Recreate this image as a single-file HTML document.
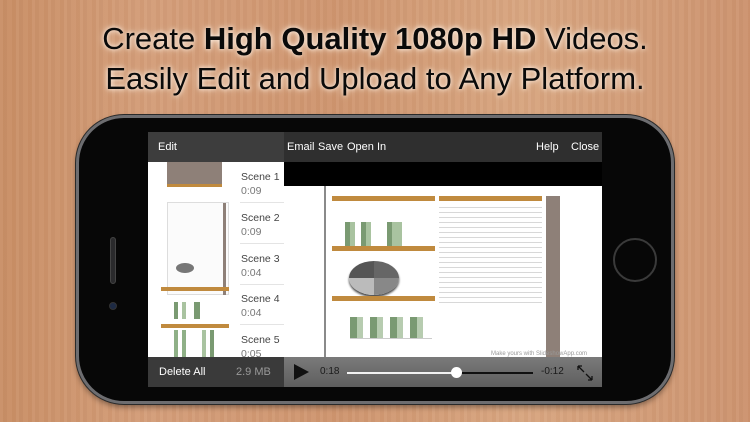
<!DOCTYPE html>
<html><head><meta charset="utf-8"><style>
*{margin:0;padding:0;box-sizing:border-box}
body{width:750px;height:422px;overflow:hidden;position:relative;font-family:"Liberation Sans",sans-serif;
background:
repeating-linear-gradient(90deg,rgba(255,255,255,0.04) 0 3px,rgba(0,0,0,0.02) 3px 7px,rgba(255,255,255,0.02) 7px 12px,rgba(120,60,20,0.04) 12px 16px),
linear-gradient(90deg,#c98f66,#d49e7a 20%,#cf9670 45%,#d8a681 70%,#cd9470);}
.t{position:absolute;left:0;width:750px;text-align:center;font-size:31px;color:#0a0a0a;
text-shadow:0 0 4px #fff3e8,0 0 8px rgba(255,240,225,.8)}
.phone{position:absolute;left:76px;top:115px;width:598px;height:289px;border-radius:48px;
background:#070707;border:3px solid #6d6d70;box-shadow:0 0 0 1px #2a2a2a,0 3px 6px rgba(0,0,0,.4)}
.scr{position:absolute;left:148px;top:132px;width:454px;height:255px;background:#fff;overflow:hidden}
.abs{position:absolute}
.top{left:0;top:0;height:30px;width:454px;background:#2f2f2f;color:#fff;font-size:11px}
.top span{position:absolute;top:9px}
.sc{position:absolute;left:93px;color:#444;font-size:10.5px;line-height:14px}
.sc b{font-weight:normal;color:#777;display:block}
.sep{position:absolute;left:92px;width:44px;height:1px;background:#e4e4e4}
.bar{position:absolute;height:8px;background:#c08a3e}
</style></head><body>
<div class="t" style="top:21px">Create <b>High Quality 1080p HD</b> Videos.</div>
<div class="t" style="top:61px">Easily Edit and Upload to Any Platform.</div>
<div class="phone"></div>
<div class="abs" style="left:110px;top:237px;width:6px;height:47px;border-radius:3px;background:#2a2a2c;border:1px solid #444"></div>
<div class="abs" style="left:109px;top:302px;width:8px;height:8px;border-radius:50%;background:#1d2a44;border:1px solid #333"></div>
<div class="abs" style="left:613px;top:238px;width:44px;height:44px;border-radius:50%;border:2px solid #3a3a3a"></div>
<div class="scr">
 <div class="abs top"><div class="abs" style="left:0;top:0;width:136px;height:30px;background:#3d3d3d"></div>
  <span style="left:10px">Edit</span><span style="left:139px">Email</span><span style="left:170px">Save</span><span style="left:199px">Open In</span><span style="left:388px">Help</span><span style="left:423px">Close</span></div>
 <div class="abs" style="left:136px;top:30px;width:318px;height:24px;background:#000"></div>
 <div class="abs" style="left:19px;top:30px;width:55px;height:25px;background:#8e8078;border-bottom:3px solid #c08a3e"></div>
 <div class="abs" style="left:19px;top:70px;width:62px;height:93px;border:1px solid #ddd;background:#fbfbfb"><div class="abs" style="right:2px;top:0;width:3px;height:92px;background:#8e8078"></div><div class="abs" style="left:8px;top:60px;width:18px;height:10px;border-radius:50%;background:#777"></div></div>
 <div class="abs" style="left:13px;top:155px;width:68px;height:4px;background:#c08a3e"></div>
 <div class="abs" style="left:26px;top:170px;width:40px;height:17px;background:linear-gradient(90deg,#7a9a72 0 4px,transparent 4px 8px,#a9c3a0 8px 12px,transparent 12px 20px,#7a9a72 20px 26px,transparent 26px)"></div>
 <div class="abs" style="left:13px;top:192px;width:68px;height:4px;background:#c08a3e"></div>
 <div class="abs" style="left:20px;top:198px;width:62px;height:30px;background:linear-gradient(90deg,transparent 0 6px,#8fb087 6px 10px,transparent 10px 14px,#8fb087 14px 18px,transparent 18px 34px,#a9c3a0 34px 38px,transparent 38px 42px,#7a9a72 42px 46px,transparent 46px)"></div>
 <div class="sc" style="top:38px">Scene 1<b>0:09</b></div><div class="sep" style="top:70px"></div>
 <div class="sc" style="top:79px">Scene 2<b>0:09</b></div><div class="sep" style="top:111px"></div>
 <div class="sc" style="top:120px">Scene 3<b>0:04</b></div><div class="sep" style="top:152px"></div>
 <div class="sc" style="top:160px">Scene 4<b>0:04</b></div><div class="sep" style="top:192px"></div>
 <div class="sc" style="top:201px">Scene 5<b>0:05</b></div>
 <div class="abs" style="left:176px;top:54px;width:2px;height:171px;background:#8a8a8a"></div>
 <div class="bar" style="left:184px;top:64px;width:103px;height:5px"></div>
 <div class="abs" style="left:197px;top:90px;width:87px;height:26px;background:linear-gradient(90deg,#7a9a72 0 5px,#a9c3a0 5px 10px,transparent 10px 16px,#7a9a72 16px 21px,#a9c3a0 21px 26px,transparent 26px 42px,#7a9a72 42px 47px,#a9c3a0 47px 57px,transparent 57px);border-bottom:1px solid #ccc"></div>
 <div class="bar" style="left:184px;top:114px;width:103px;height:5px"></div>
 <div class="abs" style="left:201px;top:129px;width:50px;height:34px;border-radius:50%;background:conic-gradient(#666 0 25%,#888 25% 50%,#bbb 50% 75%,#555 75%);box-shadow:0 2px 2px #444"></div>
 <div class="bar" style="left:184px;top:164px;width:103px;height:5px"></div>
 <div class="abs" style="left:202px;top:185px;width:82px;height:22px;background:linear-gradient(90deg,#7a9a72 0 7px,#b7ccb0 7px 13px,transparent 13px 20px,#7a9a72 20px 27px,#b7ccb0 27px 33px,transparent 33px 40px,#7a9a72 40px 47px,#b7ccb0 47px 53px,transparent 53px 60px,#7a9a72 60px 67px,#b7ccb0 67px 73px,transparent 73px);border-bottom:1px solid #ccc"></div>
 <div class="bar" style="left:291px;top:64px;width:103px;height:5px"></div>
 <div class="abs" style="left:291px;top:72px;width:103px;height:103px;background:repeating-linear-gradient(180deg,#fff 0 3px,#d8d8d8 3px 4px,#fff 4px 5px)"></div>
 <div class="abs" style="left:398px;top:64px;width:14px;height:164px;background:#8e8078"></div>
 <div class="abs" style="left:343px;top:219px;font-size:6px;color:#999">Make yours with SlideshowApp.com</div>
 <div class="abs" style="left:0;top:225px;width:136px;height:30px;background:#3a3a3a;color:#fff;font-size:11px"><span class="abs" style="left:11px;top:9px">Delete All</span><span class="abs" style="left:88px;top:9px;color:#999">2.9 MB</span></div>
 <div class="abs" style="left:136px;top:225px;width:318px;height:30px;background:linear-gradient(#7a7a7a,#5e5e5e)">
  <div class="abs" style="left:10px;top:7px;width:0;height:0;border-left:15px solid #111;border-top:8px solid transparent;border-bottom:8px solid transparent"></div>
  <span class="abs" style="left:36px;top:9px;font-size:10px;color:#1a1a1a">0:18</span>
  <div class="abs" style="left:63px;top:15px;width:110px;height:2px;background:#f2f2f2"></div>
  <div class="abs" style="left:173px;top:15px;width:76px;height:2px;background:#111"></div>
  <div class="abs" style="left:167px;top:10px;width:11px;height:11px;border-radius:50%;background:#fff"></div>
  <span class="abs" style="left:257px;top:9px;font-size:10px;color:#1a1a1a">-0:12</span>
  <svg class="abs" style="left:292px;top:7px" width="18" height="18" viewBox="0 0 18 18" fill="none" stroke="#111" stroke-width="1.3"><path d="M2 2l6 6M2 2h4M2 2v4M16 16l-6-6M16 16h-4M16 16v-4"/></svg>
 </div>
</div>
</body></html>
